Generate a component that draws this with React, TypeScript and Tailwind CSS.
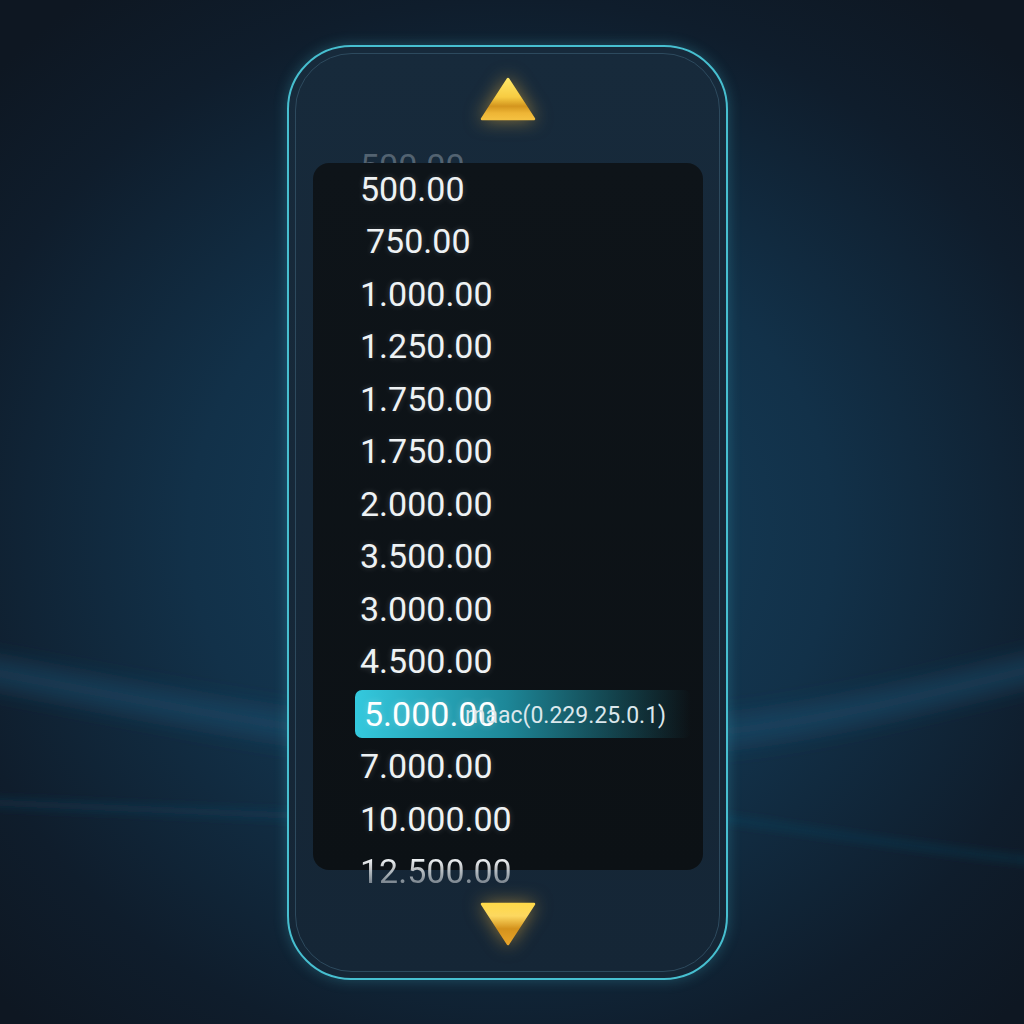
import React from "react";

const ROWS: { v: string; shift?: number }[] = [
  { v: "500.00" },
  { v: "750.00", shift: 6 },
  { v: "1.000.00" },
  { v: "1.250.00" },
  { v: "1.750.00" },
  { v: "1.750.00" },
  { v: "2.000.00" },
  { v: "3.500.00" },
  { v: "3.000.00" },
  { v: "4.500.00" },
  { v: "5.000.00" },
  { v: "7.000.00" },
  { v: "10.000.00" },
];

const SELECTED = 10;

function Triangle({ dir }: { dir: "up" | "down" }) {
  const id = `gold-${dir}`;
  return (
    <svg
      width="56"
      height="44"
      viewBox="0 0 56 44"
      className="drop-shadow-[0_0_9px_rgba(255,190,60,0.5)]"
    >
      <defs>
        {dir === "up" ? (
          <linearGradient id={id} x1="0" y1="0" x2="0" y2="1">
            <stop offset="0" stopColor="#ffe766" />
            <stop offset="0.45" stopColor="#f7cc42" />
            <stop offset="0.68" stopColor="#d3951e" />
            <stop offset="0.85" stopColor="#eeb535" />
            <stop offset="1" stopColor="#f4c040" />
          </linearGradient>
        ) : (
          <linearGradient id={id} x1="0" y1="0" x2="0" y2="1">
            <stop offset="0" stopColor="#ffd94a" />
            <stop offset="0.3" stopColor="#fcd860" />
            <stop offset="0.62" stopColor="#d4921c" />
            <stop offset="1" stopColor="#e8a42a" />
          </linearGradient>
        )}
      </defs>
      {dir === "up" ? (
        <path
          d="M28 2 L54 42 L2 42 Z"
          fill={`url(#${id})`}
          stroke={`url(#${id})`}
          strokeWidth="2.5"
          strokeLinejoin="round"
        />
      ) : (
        <path
          d="M2 2 L54 2 L28 42 Z"
          fill={`url(#${id})`}
          stroke={`url(#${id})`}
          strokeWidth="2.5"
          strokeLinejoin="round"
        />
      )}
    </svg>
  );
}

function Backdrop() {
  return (
    <svg
      className="absolute inset-0"
      width="1024"
      height="1024"
      viewBox="0 0 1024 1024"
    >
      <defs>
        <filter id="blur" x="-20%" y="-50%" width="140%" height="200%">
          <feGaussianBlur stdDeviation="11" />
        </filter>
        <filter id="blur2" x="-20%" y="-50%" width="140%" height="200%">
          <feGaussianBlur stdDeviation="5" />
        </filter>
      </defs>
      <g filter="url(#blur)" fill="none" strokeLinecap="round">
        <path d="M-20 670 C 100 692, 200 714, 300 728" stroke="#1f5877" strokeOpacity="0.5" strokeWidth="26" />
        <path d="M720 732 C 820 722, 930 694, 1044 666" stroke="#1f5877" strokeOpacity="0.5" strokeWidth="26" />
      </g>
      <g filter="url(#blur2)" fill="none" strokeLinecap="round">
        <path d="M-20 802 C 100 808, 200 812, 300 816" stroke="#1c4a66" strokeOpacity="0.35" strokeWidth="8" />
        <path d="M720 818 C 820 832, 930 850, 1044 862" stroke="#1c4f6d" strokeOpacity="0.45" strokeWidth="5" />
      </g>
    </svg>
  );
}

export default function App() {
  return (
    <div
      className="relative w-[1024px] h-[1024px] overflow-hidden bg-[radial-gradient(ellipse_70%_65%_at_50%_52%,#15405d_0%,#123149_45%,#0f1d2c_80%,#0e1722_100%)]"
      style={{ fontFamily: "Roboto, 'Noto Sans', sans-serif" }}
    >
      <Backdrop />

      <div className="relative pt-[45px] pl-[287px]">
        {/* Picker frame */}
        <div className="w-[441px] h-[935px] rounded-[64px] border-2 border-[#47bfd0] bg-linear-to-b from-[#172a3b] to-[#152636] p-[6px] shadow-[0_0_14px_rgba(70,190,210,0.3)]">
          <div className="h-full rounded-[57px] border border-[#2d4a5e] flex flex-col">
            <div className="flex justify-center pt-[23px]">
              <Triangle dir="up" />
            </div>

            <div className="relative mt-[41px] ml-[17px] w-[390px]">
              {/* faded item above the list */}
              <div className="absolute left-[47px] top-[-22px] h-[52.5px] flex items-center text-[34px] text-[#c8d2da]/35">
                500.00
              </div>

              <div className="relative h-[707px] rounded-[16px] bg-linear-to-b from-[#0e1419] to-[#0c1115]">
                <div className="mt-[1px]">
                  {ROWS.map((r, i) =>
                    i === SELECTED ? (
                      <div key={i} className="h-[52.5px] flex items-center">
                        <div className="relative ml-[42px] w-[336px] h-[48px] rounded-[7px] bg-linear-to-r from-[#34c9de] via-[#1d8798] via-45% to-transparent flex items-center pl-[9px]">
                          <span className="text-[34px] text-white [text-shadow:0_0_6px_rgba(255,255,255,0.25)]">
                            {r.v}
                          </span>
                          <span className="absolute left-[110px] top-[9px] text-[23px] text-[#dbe7ec]">
                            rnaac(0.229.25.0.1)
                          </span>
                        </div>
                      </div>
                    ) : (
                      <div
                        key={i}
                        className="h-[52.5px] flex items-center text-[34px] text-[#eef2f4] [text-shadow:0_0_6px_rgba(255,255,255,0.2)]"
                        style={{ paddingLeft: 47 + (r.shift ?? 0) }}
                      >
                        {r.v}
                      </div>
                    )
                  )}
                  <div className="h-[52.5px] flex items-center pl-[47px] text-[34px]">
                    <span className="bg-linear-to-b from-[#f2f5f7] from-25% to-[#f2f5f7]/15 bg-clip-text text-transparent">
                      12.500.00
                    </span>
                  </div>
                </div>
              </div>
            </div>

            <div className="flex justify-center mt-[32px]">
              <Triangle dir="down" />
            </div>
          </div>
        </div>
      </div>
    </div>
  );
}
